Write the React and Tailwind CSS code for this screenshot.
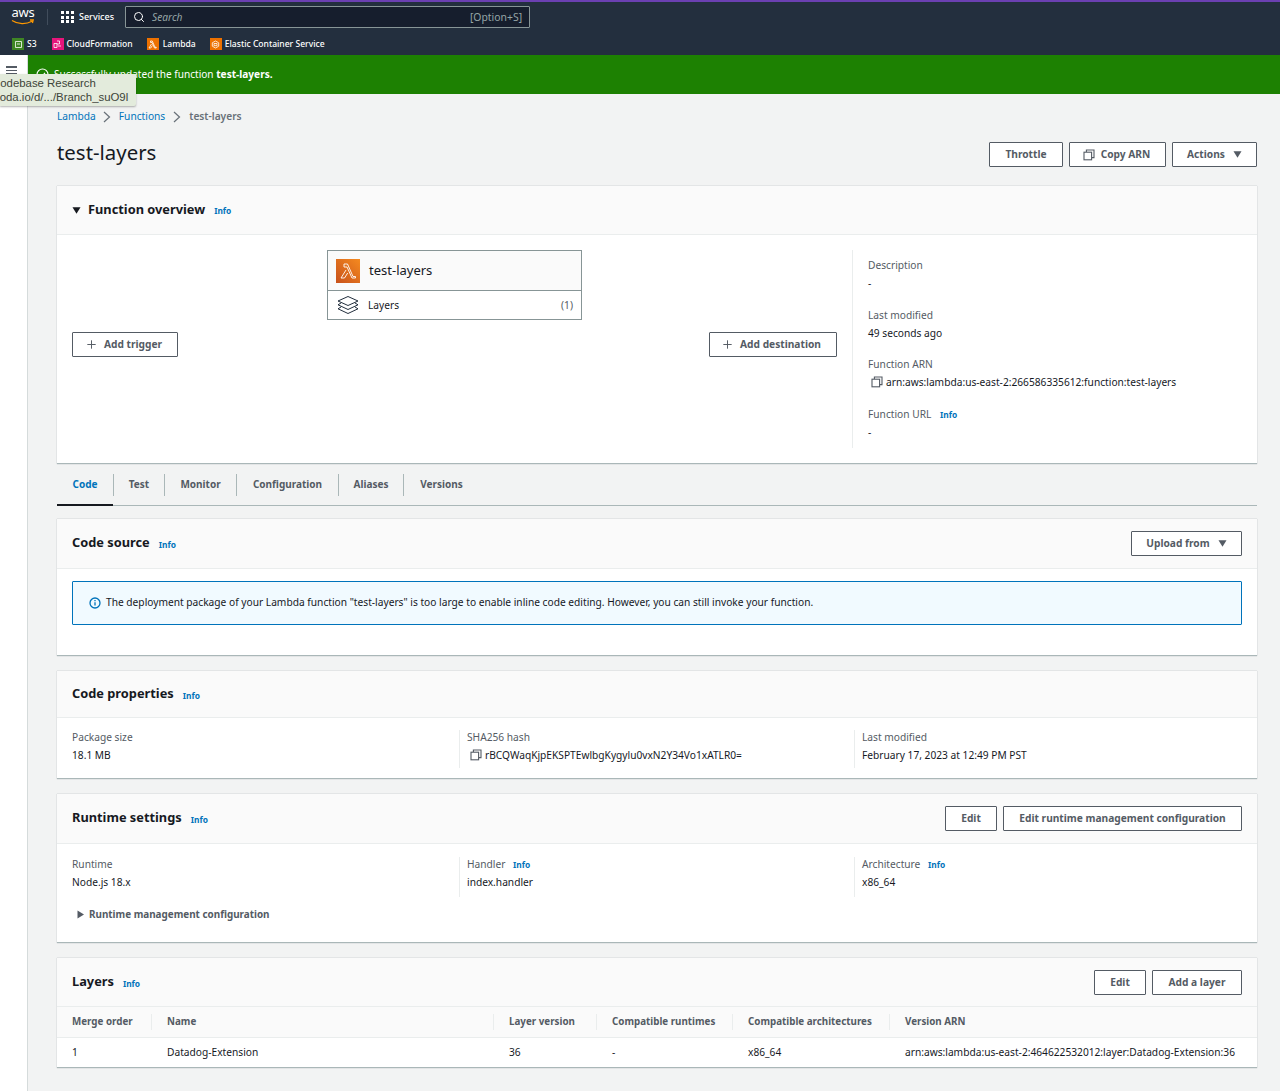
import React from 'react'
import { Search, Plus } from 'lucide-react'

const CopyIcon = ({ className = '' }) => (
  <svg className={className} width="12" height="12" viewBox="0 0 12 12" fill="none" stroke="currentColor" strokeWidth="1.1">
    <rect x="1" y="3.2" width="7.6" height="7.6" />
    <path d="M3.4 3V1h7.6v7.6H8.8" />
  </svg>
)

const Caret = ({ right = false, className = '' }) => (
  <svg className={className} width="9" height="9" viewBox="0 0 9 9" fill="currentColor">
    {right ? <path d="M1.5 0.5 8 4.5 1.5 8.5z" /> : <path d="M0.5 1.2h8L4.5 7.8z" />}
  </svg>
)

const Chevron = () => (
  <svg width="8" height="12" viewBox="0 0 8 12" fill="none" stroke="#687078" strokeWidth="1.2">
    <path d="M1 1l5.5 5L1 11" />
  </svg>
)

const Info = ({ className = '' }) => (
  <a className={`text-[8.4px] font-bold text-[#0073bb] ${className}`}>Info</a>
)

const Btn = ({ children, className = '' }) => (
  <button className={`flex h-[25px] items-center justify-center gap-[6px] rounded-[1px] border border-[#545b64] bg-white text-[10.2px] font-bold text-[#545b64] ${className}`}>
    {children}
  </button>
)

const Label = ({ children }) => <div className="h-[14px] text-[10.2px] leading-[14px] text-[#545b64]">{children}</div>
const Value = ({ children }) => <div className="mt-[4px] text-[10.2px] leading-[14px] text-[#16191f]">{children}</div>

const Card = ({ children, className = '' }) => (
  <section className={`border-b border-[#aab7b8] bg-white shadow-[0_0_1px_rgba(0,28,36,0.35)] ${className}`}>{children}</section>
)

const CardHead = ({ title, h, children }) => (
  <div className={`flex items-center border-b border-[#eaeded] bg-[#fafafa] px-[15px] ${h}`}>
    <h2 className="mt-[-1px] text-[12.8px] font-bold text-[#16191f]">{title}</h2>
    <Info className="ml-[9px] mt-[3px]" />
    <div className="ml-auto flex gap-[6px]">{children}</div>
  </div>
)

const ServiceIcon = ({ color, children }) => (
  <span className={`flex h-[12px] w-[12px] items-center justify-center ${color}`}>
    <svg width="9" height="9" viewBox="0 0 9 9" fill="none" stroke="white" strokeWidth="0.8">{children}</svg>
  </span>
)

const LambdaGlyph = ({ size = 9, width = 0.8 }) => (
  <svg width={size} height={size} viewBox="0 0 18 18" fill="none" stroke="white" strokeWidth={width}>
    <path d="M5 2h3.5l5.5 12.5h2.5V16h-3.5L8 5H5z M7 8L2 16h3.5l3.2-5" />
  </svg>
)

const Tab = ({ children, active, last, w }) => (
  <div className={`relative flex h-[22px] items-center justify-center pb-[1px] text-[10px] font-bold ${w} ${last ? '' : 'border-r border-[#aab7b8]'} ${active ? 'text-[#0073bb]' : 'text-[#545b64]'}`}>
    {children}
  </div>
)

const columns = [
  { title: 'Merge order', w: 'w-[80px]', v: '1' },
  { title: 'Name', w: 'w-[342px]', v: 'Datadog-Extension' },
  { title: 'Layer version', w: 'w-[103px]', v: '36' },
  { title: 'Compatible runtimes', w: 'w-[136px]', v: '-' },
  { title: 'Compatible architectures', w: 'w-[157px]', v: 'x86_64' },
  { title: 'Version ARN', w: 'flex-1', v: 'arn:aws:lambda:us-east-2:464622532012:layer:Datadog-Extension:36' },
]

export default function App() {
  return (
    <div className="relative min-h-[1091px] bg-[#f2f3f3] font-['Noto_Sans','Liberation_Sans',sans-serif] text-[10.2px] text-[#16191f]">
      {/* top nav */}
      <header className="h-[55px] border-t-2 border-[#6b40b2] bg-[#232f3e] text-white">
        <div className="flex h-[30px] items-center">
          <div className="relative ml-[11px] h-[22px] w-[24px]">
            <span className="block text-center text-[13px] leading-[13px] tracking-[-0.3px]">aws</span>
            <svg className="absolute left-0 top-[13px]" width="24" height="7" viewBox="0 0 24 7" fill="none" stroke="#ff9900" strokeWidth="1.3">
              <path d="M1 1.5c6 4 14 4 20 .8M19 1h3.2L21.4 4" />
            </svg>
          </div>
          <div className="ml-[12px] h-[16px] w-px bg-[#414d5c]" />
          <div className="ml-[13px] grid h-[12px] w-[13px] grid-cols-3 gap-[1.5px]">
            {[...Array(9)].map((_, i) => <span key={i} className="bg-white" />)}
          </div>
          <span className="ml-[5px] text-[9px] font-medium">Services</span>
          <div className="ml-[11px] flex h-[22px] w-[405px] items-center rounded-[1px] border border-[#879596] bg-[#161e2d] pl-[7px] pr-[7px]">
            <Search size={12} strokeWidth={2} className="text-white" />
            <span className="ml-[7px] pt-px text-[10.2px] italic text-[#95a5a6]">Search</span>
            <span className="ml-auto pt-px text-[10.4px] text-[#95a5a6]">[Option+S]</span>
          </div>
        </div>
        <div className="flex h-[23px] items-center pl-[12px] pt-[1px] text-[8.55px] font-medium">
          <ServiceIcon color="bg-[#3f8624]"><path d="M1.5 1.5h6v6h-6z M3 4h3" /></ServiceIcon>
          <span className="ml-[3px]">S3</span>
          <span className="ml-[15px]"><ServiceIcon color="bg-[#e7157b]"><path d="M1 3.5h3v4H1z M4 1h2.5v3H4 M5 6h3" /></ServiceIcon></span>
          <span className="ml-[3px]">CloudFormation</span>
          <span className="ml-[14px] flex h-[12px] w-[12px] items-center justify-center bg-[#ed7100]"><LambdaGlyph width={1.6} /></span>
          <span className="ml-[4px]">Lambda</span>
          <span className="ml-[14px]"><ServiceIcon color="bg-[#ed7100]"><path d="M4.5 1 7.7 2.8v3.4L4.5 8 1.3 6.2V2.8z M3 3.5h3v2.2H3z" /></ServiceIcon></span>
          <span className="ml-[3px]">Elastic Container Service</span>
        </div>
      </header>

      <div className="flex">
        {/* collapsed side nav */}
        <aside className="relative min-h-[1036px] w-[28px] shrink-0 border-r border-[#d5dbdb] bg-white">
          <div className="ml-[6px] mt-[11px] flex w-[11px] flex-col gap-[2px]">
            <span className="h-[1.5px] bg-[#545b64]" />
            <span className="h-[1.5px] bg-[#545b64]" />
            <span className="h-[1.5px] bg-[#545b64]" />
          </div>
        </aside>

        <main className="min-w-0 flex-1">
          <div className="flex h-[39px] items-center bg-[#1d8102] pl-[8px] text-[10.1px] text-white">
            <svg width="13" height="13" viewBox="0 0 13 13" fill="none" stroke="white" strokeWidth="1.2">
              <circle cx="6.5" cy="6.5" r="5.5" />
              <path d="M4 6.5l2 2 3-3.6" />
            </svg>
            <span className="ml-[5px]">Successfully updated the function <b>test-layers.</b></span>
          </div>

          <div className="pl-[29px] pr-[23px]">
            <nav className="flex h-[45px] items-center pt-[1px] text-[10.2px]">
              <a className="text-[#0073bb]">Lambda</a>
              <span className="mx-[7.5px]"><Chevron /></span>
              <a className="text-[#0073bb]">Functions</a>
              <span className="mx-[8px]"><Chevron /></span>
              <span className="font-semibold text-[#687078]">test-layers</span>
            </nav>

            <div className="flex h-[47px] items-start">
              <h1 className="mt-[-1px] text-[20.4px] leading-[28px] text-[#16191f]">test-layers</h1>
              <div className="ml-auto mt-[3px] flex gap-[6px]">
                <Btn className="w-[74px]">Throttle</Btn>
                <Btn className="w-[97px] pr-[2px]"><CopyIcon />Copy ARN</Btn>
                <Btn className="w-[85px] gap-[8px]">Actions<Caret /></Btn>
              </div>
            </div>

            <Card>
              <div className="flex h-[49px] items-center border-b border-[#eaeded] bg-[#fafafa] pl-[15px]">
                <Caret className="text-[#16191f]" />
                <h2 className="ml-[7px] mt-[-1px] text-[12.8px] font-bold">Function overview</h2>
                <Info className="ml-[9px] mt-[3px]" />
              </div>
              <div className="flex h-[228px] pt-[15px]">
                <div className="h-[198px] w-[796px] border-r border-[#eaeded] px-[15px]">
                  <div className="mx-auto w-[255px] border border-[#879596]">
                    <div className="flex h-[40px] items-center border-b border-[#879596] bg-[#fafafa] pl-[8px]">
                      <span className="flex h-[24px] w-[24px] items-center justify-center bg-linear-to-tr from-[#c8511b] to-[#f58a1f]"><LambdaGlyph size={18} width={0.9} /></span>
                      <span className="ml-[9px] pt-px text-[13px]">test-layers</span>
                    </div>
                    <div className="flex h-[28px] items-center pl-[9px] pr-[8px]">
                      <svg width="22" height="20" viewBox="0 0 22 20" fill="none" stroke="#232f3e" strokeWidth="1">
                        <path d="M11 1.5 21 6l-10 4.5L1 6z" />
                        <path d="M4 8 1 9.8l10 4.7 10-4.7L18 8" />
                        <path d="M4 12 1 13.8l10 4.7 10-4.7L18 12" />
                      </svg>
                      <span className="ml-[9px] pt-px text-[10.2px]">Layers</span>
                      <span className="ml-auto pt-px text-[10.2px] text-[#545b64]">(1)</span>
                    </div>
                  </div>
                  <div className="mt-[12px] flex justify-between">
                    <Btn className="w-[106px] pr-[3px]"><Plus size={13} strokeWidth={1.8} />Add trigger</Btn>
                    <Btn className="w-[128px] pr-[4px]"><Plus size={13} strokeWidth={1.8} />Add destination</Btn>
                  </div>
                </div>
                <div className="pl-[15px] pt-[8px]">
                  <Label>Description</Label>
                  <Value>-</Value>
                  <div className="mt-[18px]"><Label>Last modified</Label><Value>49 seconds ago</Value></div>
                  <div className="mt-[17px]"><Label>Function ARN</Label>
                    <div className="mt-[4px] flex items-center pl-[3px] leading-[14px] text-[#16191f]"><CopyIcon className="text-[#545b64]" /><span className="ml-[3px]">arn:aws:lambda:us-east-2:266586335612:function:test-layers</span></div>
                  </div>
                  <div className="mt-[18px]"><Label>Function URL <Info className="ml-[6px]" /></Label><Value>-</Value></div>
                </div>
              </div>
            </Card>

            <div className="mt-[9px] flex h-[33px] items-start border-b border-[#aab7b8] pt-[1px]">
              <div className="relative">
                <Tab active w="w-[57px]">Code</Tab>
                <span className="absolute left-0 top-[30px] h-[2px] w-[56px] bg-[#16191f]" />
              </div>
              <Tab w="w-[51px]">Test</Tab>
              <Tab w="w-[72px]">Monitor</Tab>
              <Tab w="w-[102px]">Configuration</Tab>
              <Tab w="w-[65px]">Aliases</Tab>
              <Tab last w="w-[75px]">Versions</Tab>
            </div>

            <Card className="mt-[13px]">
              <CardHead title="Code source" h="h-[50px]">
                <Btn className="w-[111px] gap-[8px]">Upload from<Caret /></Btn>
              </CardHead>
              <div className="h-[86px] px-[15px] pt-[12px]">
                <div className="flex h-[44px] items-center rounded-[1px] border border-[#0073bb] bg-[#f1faff] pl-[16px] text-[10.2px]">
                  <svg width="12" height="12" viewBox="0 0 12 12" fill="none" stroke="#0073bb" strokeWidth="1.3">
                    <circle cx="6" cy="6" r="5" />
                    <path d="M6 5.2v3.4M6 3v1.2" />
                  </svg>
                  <span className="ml-[5px]">The deployment package of your Lambda function "test-layers" is too large to enable inline code editing. However, you can still invoke your function.</span>
                </div>
              </div>
            </Card>

            <Card className="mt-[15px]">
              <CardHead title="Code properties" h="h-[47px] pt-[1px]" />
              <div className="grid h-[60px] grid-cols-[388px_395px_1fr] pl-[15px] pt-[12px]">
                <div className="h-[38px] border-r border-[#eaeded]"><Label>Package size</Label><Value>18.1 MB</Value></div>
                <div className="h-[38px] border-r border-[#eaeded] pl-[7px]"><Label>SHA256 hash</Label>
                  <div className="mt-[4px] flex items-center pl-[3px] leading-[14px]"><CopyIcon className="text-[#545b64]" /><span className="ml-[3px]">rBCQWaqKjpEKSPTEwlbgKygylu0vxN2Y34Vo1xATLR0=</span></div>
                </div>
                <div className="pl-[7px]"><Label>Last modified</Label><Value>February 17, 2023 at 12:49 PM PST</Value></div>
              </div>
            </Card>

            <Card className="mt-[15px]">
              <CardHead title="Runtime settings" h="h-[50px]">
                <Btn className="w-[52px]">Edit</Btn>
                <Btn className="w-[239px]">Edit runtime management configuration</Btn>
              </CardHead>
              <div className="h-[98px] pl-[15px] pt-[13px]">
                <div className="grid grid-cols-[388px_395px_1fr]">
                  <div className="h-[40px] border-r border-[#eaeded]"><Label>Runtime</Label><Value>Node.js 18.x</Value></div>
                  <div className="h-[40px] border-r border-[#eaeded] pl-[7px]"><Label>Handler <Info className="ml-[5px]" /></Label><Value>index.handler</Value></div>
                  <div className="pl-[7px]"><Label>Architecture <Info className="ml-[5px]" /></Label><Value>x86_64</Value></div>
                </div>
                <div className="mt-[10px] flex items-center pl-[4px] text-[9.9px] font-bold text-[#545b64]">
                  <Caret right />
                  <span className="ml-[4px]">Runtime management configuration</span>
                </div>
              </div>
            </Card>

            <Card className="mt-[15px]">
              <CardHead title="Layers" h="h-[49px] pt-[1px]">
                <Btn className="w-[52px]">Edit</Btn>
                <Btn className="w-[90px]">Add a layer</Btn>
              </CardHead>
              <div className="flex h-[31px] items-center border-b border-[#eaeded] bg-[#fafafa] pl-[15px]">
                {columns.map((c, i) => (
                  <div key={c.title} className={`${c.w} flex h-[16px] items-center text-[9.8px] font-bold text-[#545b64] ${i < 5 ? 'border-r border-[#eaeded]' : ''} ${i > 0 ? 'pl-[15px]' : ''}`}>{c.title}</div>
                ))}
              </div>
              <div className="flex h-[29px] items-center pl-[15px]">
                {columns.map((c, i) => (
                  <div key={c.title} className={`${c.w} whitespace-nowrap ${i > 0 ? 'pl-[15px]' : ''}`}>{c.v}</div>
                ))}
              </div>
            </Card>
          </div>
        </main>
      </div>

      {/* browser link tooltip sitting over the page */}
      <div className="absolute left-0 top-[74px] h-[32px] w-[136px] overflow-hidden rounded-br-[2px] bg-[#e3ebdc] pt-[2px] font-['Liberation_Sans',sans-serif] text-[11.4px] leading-[14px] text-[#3d4438] shadow-[0_1px_2px_rgba(0,0,0,0.3)]">
        <div className="ml-[-8px] whitespace-nowrap">Codebase Research</div>
        <div className="ml-[-6px] whitespace-nowrap">coda.io/d/.../Branch_suO9l</div>
      </div>
    </div>
  )
}
